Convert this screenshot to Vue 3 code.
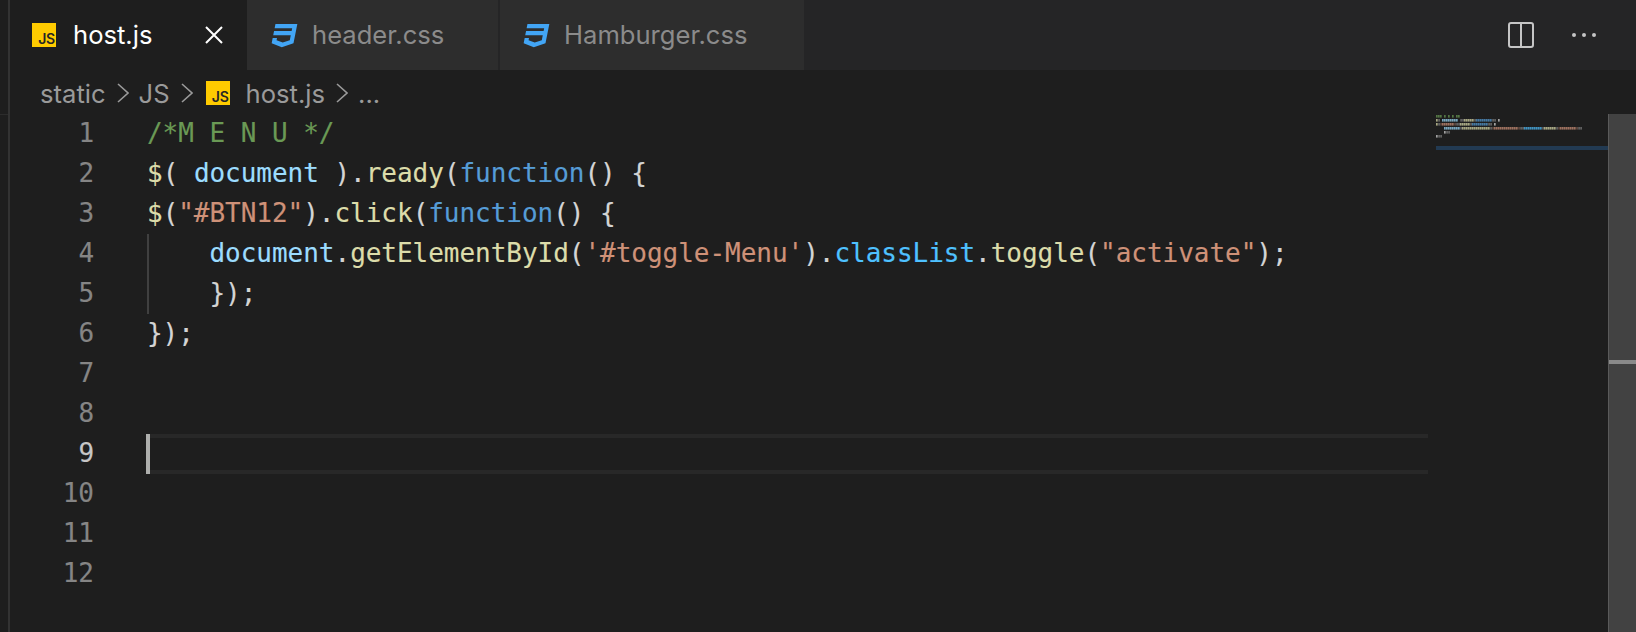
<script setup>
const lines = [
  { tokens: [['c', '/*M E N U */']] },
  { tokens: [['f', '$'], ['p', '( '], ['v', 'document'], ['p', ' ).'], ['f', 'ready'], ['p', '('], ['k', 'function'], ['p', '() {']] },
  { tokens: [['f', '$'], ['p', '('], ['s', '"#BTN12"'], ['p', ').'], ['f', 'click'], ['p', '('], ['k', 'function'], ['p', '() {']] },
  { guide: true, tokens: [['p', '    '], ['v', 'document'], ['p', '.'], ['f', 'getElementById'], ['p', '('], ['s', "'#toggle-Menu'"], ['p', ').'], ['o', 'classList'], ['p', '.'], ['f', 'toggle'], ['p', '('], ['s', '"activate"'], ['p', ');']] },
  { guide: true, tokens: [['p', '    });']] },
  { tokens: [['p', '});']] },
  { tokens: [] },
  { tokens: [] },
  { active: true, tokens: [] },
  { tokens: [] },
  { tokens: [] },
  { tokens: [] },
]

const palette = { c: '#6a9955', f: '#dcdcaa', v: '#9cdcfe', k: '#569cd6', s: '#ce9178', o: '#4fc1ff', p: '#d4d4d4' }

// Minimap: each character becomes a 2px cell in a 4px row; spaces and dots stay empty,
// which gives the speckled look of a scaled-down text rendering.
const miniBars = []
lines.forEach((line, row) => {
  let col = 0
  line.tokens.forEach(([kind, text]) => {
    for (const ch of text) {
      if (ch !== ' ') {
        const narrow = '.,;:()\'"'.includes(ch)
        miniBars.push({ x: col * 2 + (narrow ? 0.6 : 0), y: row * 4 + 1, w: narrow ? 0.9 : 1.7, fill: palette[kind] })
      }
      col += 1
    }
  })
})

const cssIcon = 'M5 3l-.65 3.34h13.59L17.5 8.5H3.92l-.66 3.33h13.59l-.76 3.81-5.48 1.81-4.75-1.81.33-1.64H2.85l-.79 4 7.85 3 9.05-3 1.2-6.03.24-1.21L21.94 3H5z'
</script>

<template>
  <div class="window">
    <div class="rail"><div class="rail-top"></div></div>
    <div class="main">
      <div class="tabbar">
        <div class="tab tab-active">
          <span class="js-icon">JS</span>
          <span class="tab-label">host.js</span>
          <svg class="close" width="18" height="18" viewBox="0 0 18 18">
            <path d="M1 1l16 16M17 1L1 17" stroke="#ffffff" stroke-width="2" fill="none" />
          </svg>
        </div>
        <div class="tab tab-header">
          <svg class="css-icon" width="31" height="31" viewBox="0 0 24 24"><path :d="cssIcon" fill="#42a5f5" /></svg>
          <span class="tab-label">header.css</span>
        </div>
        <div class="tab tab-burger">
          <svg class="css-icon" width="31" height="31" viewBox="0 0 24 24"><path :d="cssIcon" fill="#42a5f5" /></svg>
          <span class="tab-label">Hamburger.css</span>
        </div>
        <div class="actions">
          <svg width="26" height="26" viewBox="0 0 26 26">
            <rect x="1" y="1" width="24" height="24" rx="2" fill="none" stroke="#c5c5c5" stroke-width="2" />
            <path d="M13 1v24" stroke="#c5c5c5" stroke-width="2" />
          </svg>
          <svg width="26" height="6" viewBox="0 0 26 6" fill="#c5c5c5">
            <circle cx="3" cy="3" r="2" /><circle cx="13" cy="3" r="2" /><circle cx="23" cy="3" r="2" />
          </svg>
        </div>
      </div>

      <div class="crumbs">
        <span>static</span>
        <svg class="chev" width="12" height="20" viewBox="0 0 12 20"><path d="M1 1l10 9-10 9" /></svg>
        <span>JS</span>
        <svg class="chev" width="12" height="20" viewBox="0 0 12 20"><path d="M1 1l10 9-10 9" /></svg>
        <span class="js-icon crumb-icon">JS</span>
        <span>host.js</span>
        <svg class="chev" width="12" height="20" viewBox="0 0 12 20"><path d="M1 1l10 9-10 9" /></svg>
        <span>...</span>
      </div>

      <div class="editor">
        <div class="gutter">
          <div v-for="(line, i) in lines" :key="i" class="num" :class="{ 'num-active': line.active }">{{ i + 1 }}</div>
        </div>
        <div class="code">
          <div
            v-for="(line, i) in lines"
            :key="i"
            class="line"
            :class="{ 'line-guide': line.guide, 'line-active': line.active }"
          ><span v-for="(t, j) in line.tokens" :key="j" :class="'t-' + t[0]">{{ t[1] }}</span></div>
        </div>
        <div class="minimap">
          <svg width="172" height="40" viewBox="0 0 172 40">
            <rect v-for="(b, i) in miniBars" :key="i" :x="b.x" :y="b.y" :width="b.w" height="2.6" :fill="b.fill" opacity="0.72" />
            <rect x="0" y="32" width="172" height="4" fill="#223a52" />
          </svg>
        </div>
        <div class="scrollbar"><div class="scroll-mark"></div></div>
      </div>
    </div>
  </div>
</template>

<style>
html, body { background: #1e1e1e; }
</style>

<style scoped>
.window {
  display: flex;
  width: 1636px;
  height: 632px;
  overflow: hidden;
  background: #1e1e1e;
  font-family: Inter, "Liberation Sans", sans-serif;
}
.rail {
  width: 8px;
  flex: none;
  background: #1e1e1e;
  border-right: 2px solid #333333;
}
.rail-top {
  height: 114px;
  border-bottom: 1px solid #2c2c2c;
}
.main {
  flex: 1;
  min-width: 0;
  display: flex;
  flex-direction: column;
}
.tabbar {
  height: 70px;
  flex: none;
  display: flex;
  background: #252526;
}
.tab {
  display: flex;
  align-items: center;
  height: 100%;
  background: #2d2d2d;
  border-right: 2px solid #252526;
  box-sizing: border-box;
  font-size: 25.6px;
  color: #8b8b8b;
}
.tab-label { padding-bottom: 1px; }
.tab-active {
  width: 237px;
  padding-left: 22px;
  background: #1e1e1e;
  border-right: none;
  color: #ffffff;
}
.tab-active .tab-label { margin-left: 17px; width: 132px; }
.tab-header { width: 253px; padding-left: 22px; }
.tab-burger { width: 306px; padding-left: 21px; }
.css-icon { flex: none; }
.tab .css-icon + .tab-label { margin-left: 12px; }
.close { flex: none; }
.actions {
  margin-left: auto;
  display: flex;
  align-items: center;
  gap: 37px;
  padding-right: 39px;
}
.js-icon {
  width: 24px;
  height: 24px;
  flex: none;
  box-sizing: border-box;
  padding: 7px 1px 0 0;
  background: #ffcb00;
  color: #252526;
  font-size: 14px;
  line-height: 17px;
  font-weight: 600;
  text-align: right;
  letter-spacing: -0.2px;
}
.crumbs {
  height: 44px;
  flex: none;
  box-sizing: border-box;
  padding: 2px 0 0 30px;
  display: flex;
  align-items: center;
  font-size: 25.6px;
  color: #9a9a9a;
}
.chev {
  flex: none;
  margin: 0 10px 0 11px;
}
.chev path {
  fill: none;
  stroke: #9a9a9a;
  stroke-width: 1.6;
}
.crumb-icon {
  margin: 0 16px 0 3px;
}
.editor {
  flex: 1;
  min-height: 0;
  display: flex;
  font-family: "DejaVu Sans Mono", monospace;
  font-size: 26px;
  letter-spacing: -0.03px;
  -webkit-text-stroke: 0.15px;
}
.gutter {
  width: 137px;
  flex: none;
  box-sizing: border-box;
  padding-right: 53px;
  text-align: right;
  color: #858585;
}
.num {
  height: 40px;
  line-height: 38px;
}
.num-active { color: #c6c6c6; }
.code {
  width: 1281px;
  flex: none;
}
.line {
  height: 40px;
  line-height: 38px;
  white-space: pre;
  box-sizing: border-box;
  color: #d4d4d4;
}
.line-guide { box-shadow: inset 2px 0 0 #404040; }
.line-active {
  border-top: 4px solid #282828;
  border-bottom: 4px solid #282828;
  position: relative;
}
.line-active::before {
  content: "";
  position: absolute;
  left: -1px;
  top: -4px;
  width: 4px;
  height: 40px;
  background: #aeafad;
}
.t-c { color: #6a9955; }
.t-f { color: #dcdcaa; }
.t-v { color: #9cdcfe; }
.t-k { color: #569cd6; }
.t-s { color: #ce9178; }
.t-o { color: #4fc1ff; }
.t-p { color: #d4d4d4; }
.minimap {
  width: 180px;
  flex: none;
  box-sizing: border-box;
  padding-left: 8px;
}
.minimap svg { display: block; }
.scrollbar {
  flex: 1;
  background: #424242;
  border-left: 1px solid #5a5a5a;
  padding-top: 246px;
}
.scroll-mark {
  height: 4px;
  background: #8a8a8a;
}
</style>
